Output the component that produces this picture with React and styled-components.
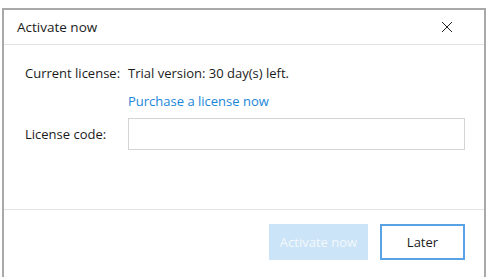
import styled, { createGlobalStyle } from 'styled-components';

const GlobalStyle = createGlobalStyle`
	html, body {
		margin: 0;
		padding: 0;
		background: #ffffff;
		overflow: hidden;
	}
	body {
		font-family: 'Open Sans', 'Noto Sans', sans-serif;
		color: #1b1b1b;
	}
`;

const Page = styled.div`
	padding: 8px 0 0 2px;
	width: 498px;
	height: 277px;
	box-sizing: border-box;
`;

const Dialog = styled.div`
	width: 484px;
	height: 269px;
	box-sizing: border-box;
	border: 2px solid #a9a9a9;
	border-bottom: none;
	background: #ffffff;
	display: flex;
	flex-direction: column;
`;

const Header = styled.div`
	height: 34px;
	display: flex;
	align-items: center;
	justify-content: space-between;
	padding: 0 31px 0 13px;
	border-bottom: 1px solid #e3e3e3;
	font-size: 13.5px;
`;

const CloseButton = styled.button`
	width: 12px;
	height: 12px;
	padding: 0;
	border: none;
	background: none;
	display: flex;
	cursor: pointer;
`;

const Body = styled.div`
	height: 165px;
	box-sizing: border-box;
	padding: 17px 19px 0 21px;
	display: grid;
	grid-template-columns: 103px 1fr;
	grid-template-rows: 22px 26px 32px;
	row-gap: 4px;
	align-items: center;
	font-size: 13px;
	border-bottom: 1px solid #e3e3e3;
`;

const Label = styled.span`
	white-space: nowrap;
`;

const Link = styled.a`
	grid-column: 2;
	color: #1a86d9;
	text-decoration: none;
	cursor: pointer;
`;

const CodeInput = styled.input`
	height: 32px;
	box-sizing: border-box;
	border: 1px solid #d4d4d4;
	outline: none;
	padding: 0 8px;
	font: inherit;
`;

const Footer = styled.div`
	display: flex;
	justify-content: flex-end;
	gap: 12px;
	padding: 14px 19px 0 0;
`;

const Button = styled.button`
	height: 36px;
	width: ${(props) => props.w}px;
	box-sizing: border-box;
	font-family: inherit;
	font-size: 13px;
	border: 2px solid ${(props) => (props.primary ? '#cce4f7' : '#5aa2e6')};
	background: ${(props) => (props.primary ? '#cce4f7' : '#ffffff')};
	color: ${(props) => (props.primary ? '#f3f8fc' : '#1b1b1b')};
	cursor: pointer;
`;

const App = () => {
	return (
		<>
			<GlobalStyle />
			<Page>
				<Dialog>
					<Header>
						<span>Activate now</span>
						<CloseButton title="Close">
							<svg width="12" height="12" viewBox="0 0 12 12">
								<path d="M1 1 L11 11 M11 1 L1 11" stroke="#222" strokeWidth="1" fill="none" />
							</svg>
						</CloseButton>
					</Header>
					<Body>
						<Label>Current license:</Label>
						<span>Trial version: 30 day(s) left.</span>
						<Link>Purchase a license now</Link>
						<Label>License code:</Label>
						<CodeInput type="text" />
					</Body>
					<Footer>
						<Button primary w={99} disabled>
							Activate now
						</Button>
						<Button w={85}>Later</Button>
					</Footer>
				</Dialog>
			</Page>
		</>
	);
};

export default App;
